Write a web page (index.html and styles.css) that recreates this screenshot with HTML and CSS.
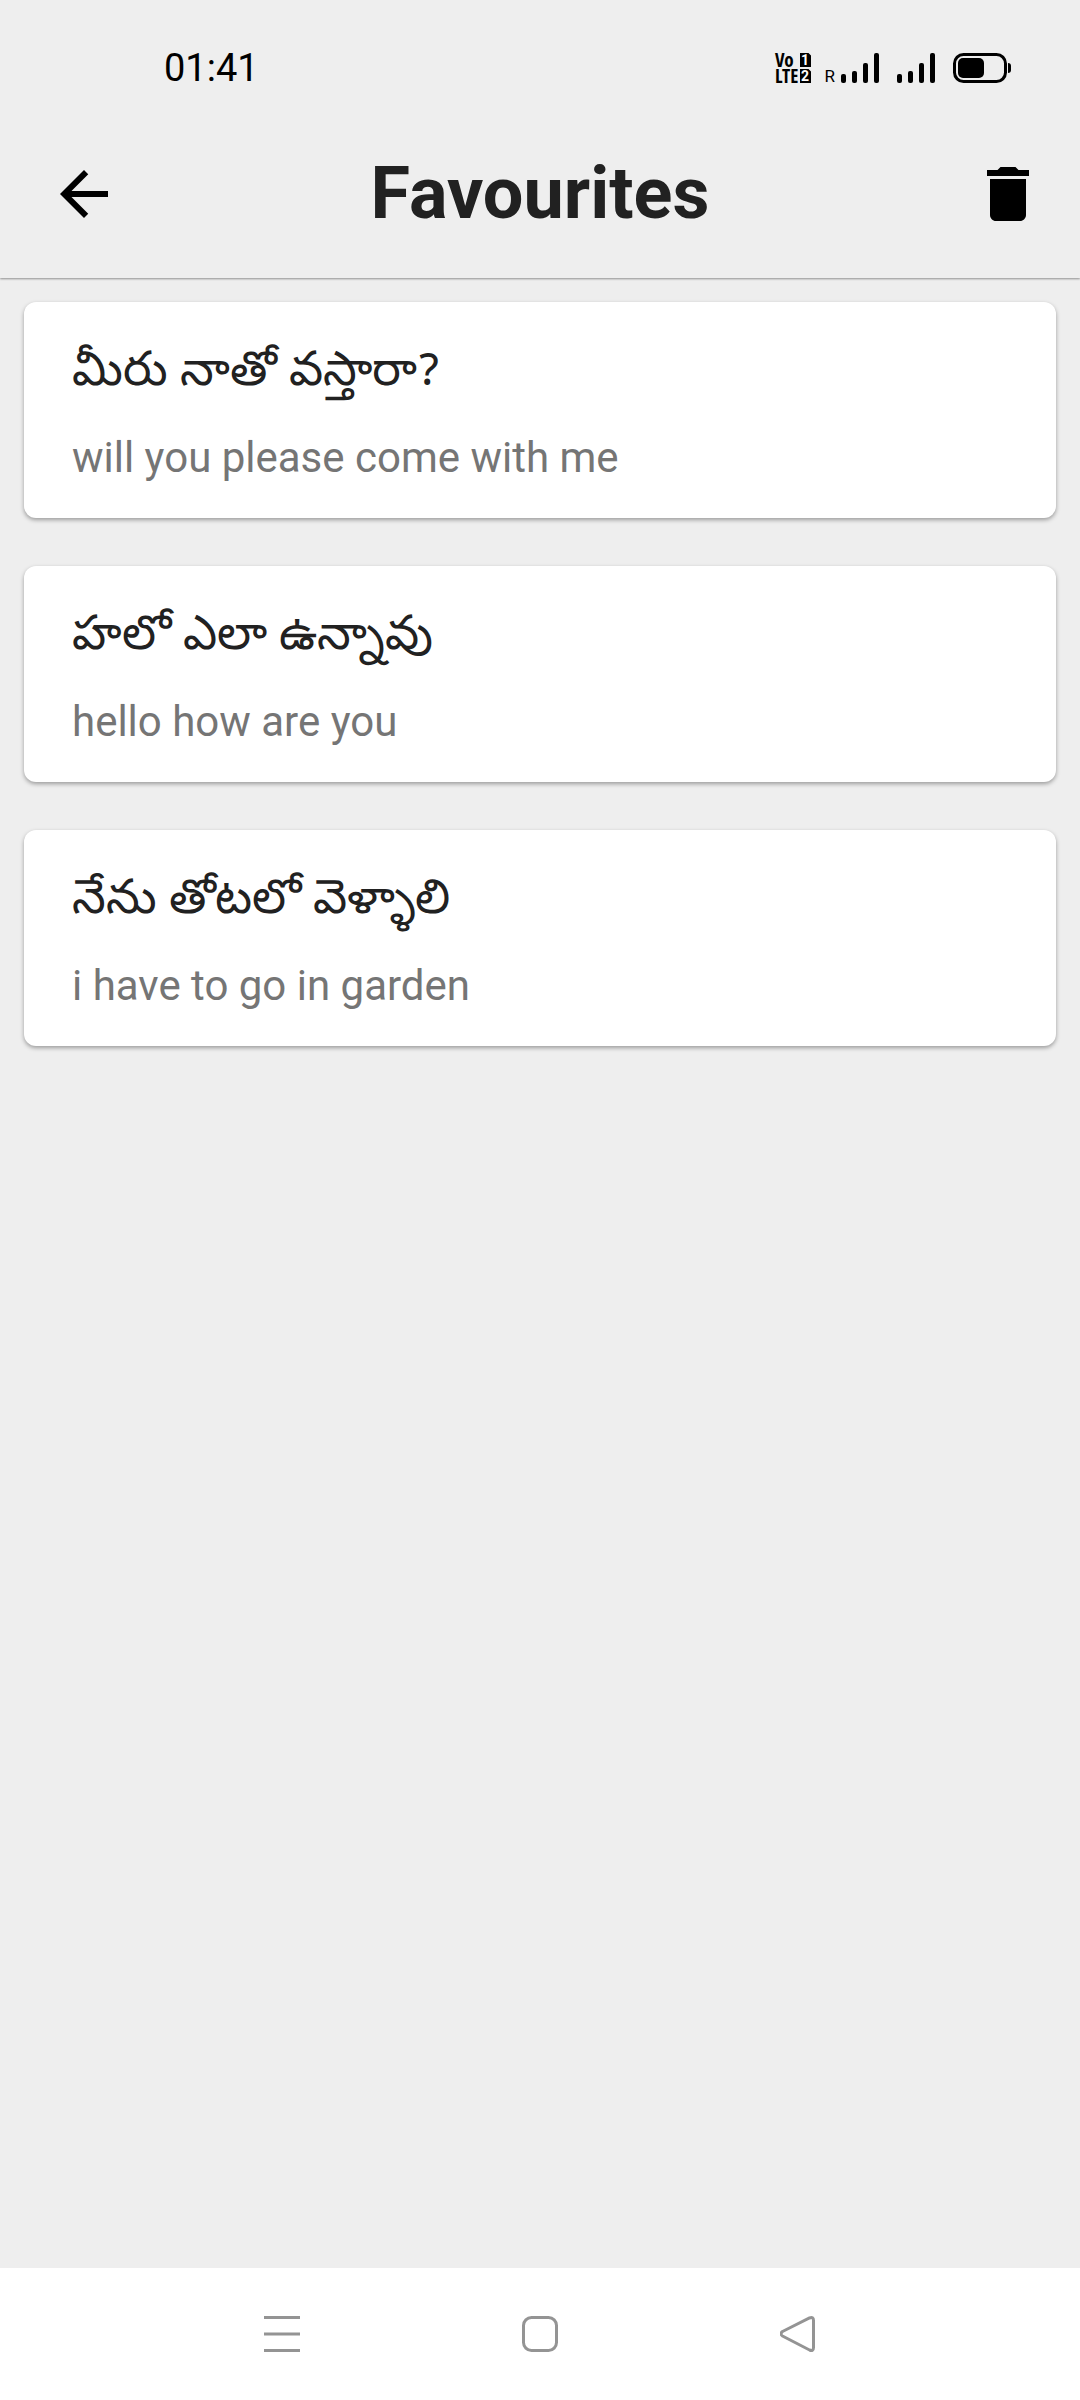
FILE: index.html
```html
<!DOCTYPE html>
<html lang="en">
<head>
<meta charset="utf-8">
<meta name="viewport" content="width=device-width, initial-scale=1">
<title>Favourites</title>
<link rel="stylesheet" href="styles.css">
</head>
<body>
<div class="screen">
  <header class="top">
    <div class="status">
      <time class="clock">01:41</time>
      <div class="indicators">
        <svg class="volte" width="36" height="30" viewBox="0 0 36 30" role="img" aria-label="VoLTE on SIM 1 and SIM 2">
          <g class="volte-text">
            <text x="0" y="14">Vo</text>
            <text x="0" y="30">LTE</text>
          </g>
          <path d="M25 0h8.500l2.500 2.500V14H25zM25 16h8.500l2.500 2.500V30H25z"/>
          <g class="volte-sim">
            <text x="30" y="12">1</text>
            <text x="30" y="28">2</text>
          </g>
        </svg>
        <div class="signal">
          <span class="roaming">R</span>
          <svg width="38" height="30" viewBox="0 0 38 30" aria-hidden="true">
            <rect x="0" y="21" width="5" height="9" rx="2"/><rect x="11" y="18" width="5" height="12" rx="2"/><rect x="22" y="10" width="5" height="20" rx="2"/><rect x="33" y="0" width="5" height="30" rx="2"/>
          </svg>
        </div>
        <svg class="signal-two" width="38" height="30" viewBox="0 0 38 30" aria-hidden="true">
          <rect x="0" y="21" width="5" height="9" rx="2"/><rect x="11" y="18" width="5" height="12" rx="2"/><rect x="22" y="10" width="5" height="20" rx="2"/><rect x="33" y="0" width="5" height="30" rx="2"/>
        </svg>
        <svg width="58" height="30" viewBox="0 0 58 30" aria-hidden="true">
          <rect x="1.500" y="1.500" width="51" height="27" rx="9" fill="none" stroke="#000" stroke-width="3"/>
          <rect x="5" y="5" width="26" height="20" rx="5"/>
          <path d="M55 10q3 0 3 3v4q0 3-3 3z"/>
        </svg>
      </div>
    </div>
    <div class="appbar">
      <button class="icon-button icon-button-start" type="button" aria-label="Back">
        <svg width="72" height="72" viewBox="0 0 24 24"><path d="M20 11H7.830l5.590-5.590L12 4l-8 8 8 8 1.410-1.410L7.830 13H20v-2z"/></svg>
      </button>
      <h1 class="title">Favourites</h1>
      <button class="icon-button icon-button-end" type="button" aria-label="Delete all">
        <svg width="72" height="72" viewBox="0 0 24 24"><path d="M6 19c0 1.100.9 2 2 2h8c1.100 0 2-.9 2-2V7H6v12zM19 4h-3.500l-1-1h-5l-1 1H5v2h14V4z"/></svg>
      </button>
    </div>
  </header>

  <main class="content">
    <ul class="list">
      <li class="card">
        <p class="phrase" lang="te">మీరు నాతో వస్తారా<span class="mark">?</span></p>
        <p class="meaning">will you please come with me</p>
      </li>
      <li class="card">
        <p class="phrase" lang="te">హలో ఎలా ఉన్నావు</p>
        <p class="meaning">hello how are you</p>
      </li>
      <li class="card">
        <p class="phrase" lang="te">నేను తోటలో వెళ్ళాలి</p>
        <p class="meaning">i have to go in garden</p>
      </li>
    </ul>
  </main>

  <nav class="navbar" aria-label="System">
    <button class="nav-button" type="button" aria-label="Recent apps">
      <svg width="36" height="36" viewBox="0 0 36 36"><path d="M0 1.500h36M0 18h36M0 34.500h36"/></svg>
    </button>
    <button class="nav-button" type="button" aria-label="Home">
      <svg width="36" height="36" viewBox="0 0 36 36"><rect x="1.500" y="1.500" width="33" height="33" rx="8"/></svg>
    </button>
    <button class="nav-button" type="button" aria-label="Back">
      <svg width="36" height="36" viewBox="0 0 36 36"><path d="M2.500 15.500 29.500 2Q33.500 .5 33.500 4.500V31.500Q33.500 35.500 29.500 34L2.500 20Q-.5 18 2.500 15.500z"/></svg>
    </button>
  </nav>
</div>
</body>
</html>
```
FILE: styles.css
```css
* {
  box-sizing: border-box;
}

body {
  margin: 0;
  background: #eee;
  color: #212121;
  font-family: Roboto, "Noto Sans", sans-serif;
}

h1,
p,
ul {
  margin: 0;
  padding: 0;
}

button {
  padding: 0;
  border: 0;
  background: none;
  cursor: pointer;
}

svg {
  display: block;
  flex: none;
}

.screen {
  display: flex;
  flex-direction: column;
  min-height: 100vh;
}

.top {
  box-shadow: 0 1px 2px rgba(0, 0, 0, 0.4);
}

.status {
  display: flex;
  align-items: center;
  justify-content: space-between;
  height: 110px;
  padding: 26px 69px 0 164px;
  color: #000;
}

.clock {
  font-size: 38px;
  line-height: 44px;
}

.indicators {
  display: flex;
  align-items: center;
}

.volte {
  overflow: visible;
}

.volte-text {
  font: 900 19px/1 "Open Sans Condensed", "Roboto Condensed", Roboto, sans-serif;
}

.volte-sim {
  font: 700 14px/1 Roboto, sans-serif;
  fill: #fff;
  text-anchor: middle;
}

.signal {
  display: flex;
  align-items: flex-end;
  gap: 6px;
  margin: 0 18px 0 14px;
}

.signal-two {
  margin-right: 18px;
}

.roaming {
  font-size: 17px;
  line-height: 14px;
}

.appbar {
  display: grid;
  grid-template-columns: 1fr auto 1fr;
  align-items: center;
  height: 168px;
}

.icon-button {
  width: 72px;
  height: 72px;
}

.icon-button-start {
  margin-left: 48px;
}

.icon-button-end {
  justify-self: end;
  margin-right: 36px;
}

.title {
  font-size: 72px;
  font-weight: 700;
  line-height: 84px;
}

.content {
  flex: 1;
  padding: 24px;
}

.list {
  display: flex;
  flex-direction: column;
  gap: 48px;
  list-style: none;
}

.card {
  display: flex;
  flex-direction: column;
  gap: 26px;
  padding: 32px 48px;
  border-radius: 12px;
  background: #fff;
  box-shadow: 0 2px 4px rgba(0, 0, 0, 0.35);
}

.phrase {
  font-size: 48px;
  line-height: 70px;
}

.mark {
  font-family: "Noto Sans Telugu", "Noto Sans", sans-serif;
  line-height: 1;
}

.meaning {
  color: #757575;
  font-size: 42px;
  line-height: 56px;
}

.navbar {
  display: flex;
  justify-content: center;
  height: 132px;
  background: #fff;
}

.nav-button {
  display: flex;
  flex: 0 1 258px;
  align-items: center;
  justify-content: center;
}

.nav-button svg {
  fill: none;
  stroke: #949494;
  stroke-width: 3;
}
```
